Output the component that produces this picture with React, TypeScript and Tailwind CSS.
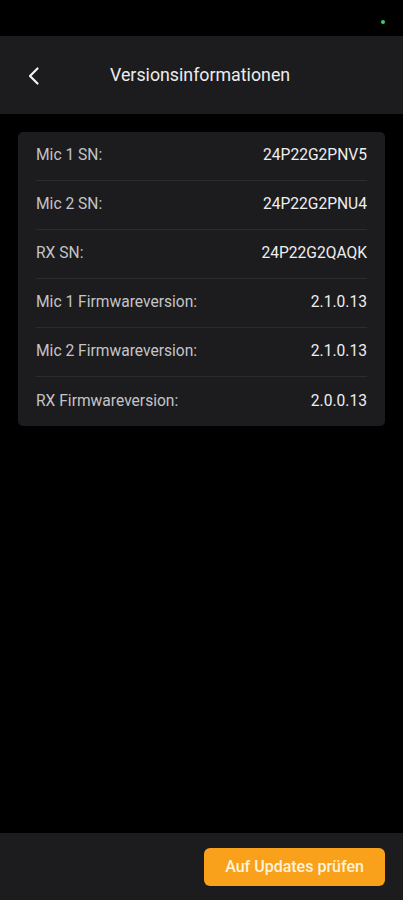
import React from "react";

const rows: [string, string][] = [
  ["Mic 1 SN:", "24P22G2PNV5"],
  ["Mic 2 SN:", "24P22G2PNU4"],
  ["RX SN:", "24P22G2QAQK"],
  ["Mic 1 Firmwareversion:", "2.1.0.13"],
  ["Mic 2 Firmwareversion:", "2.1.0.13"],
  ["RX Firmwareversion:", "2.0.0.13"],
];

export default function App() {
  return (
    <div
      className="w-[403px] h-[900px] bg-black flex flex-col text-white"
      style={{ fontFamily: "Roboto, 'Noto Sans', sans-serif" }}
    >
      <div className="h-[36px] flex justify-end items-start pr-[18px] pt-[20px]">
        <div className="w-[4px] h-[4px] rounded-full bg-[#3ecf6a]" />
      </div>
      <div className="h-[78px] bg-[#1c1c1f] flex items-center">
        <div className="pl-[26px] pt-[1px]">
          <svg width="16" height="20" viewBox="0 0 16 20" fill="none">
            <path d="M11.5 2.5 L4 10 L11.5 17.5" stroke="#f2f2f2" strokeWidth="2.2" strokeLinecap="round" strokeLinejoin="round" />
          </svg>
        </div>
        <div className="ml-[68px] text-[17.8px] text-[#ececec] pt-[1px]">Versionsinformationen</div>
      </div>
      <div className="px-[18px] pt-[18px]">
        <div className="bg-[#1c1c1f] rounded-[5px] px-[18px]">
          {rows.map(([l, v], i) => (
            <div
              key={l}
              className={`h-[49px] flex items-center justify-between text-[15.6px] ${i < rows.length - 1 ? "border-b border-[#2c2c30]" : ""}`}
            >
              <span className="text-[#c4c4c6]">{l}</span>
              <span className="text-[#eeeeee]">{v}</span>
            </div>
          ))}
        </div>
      </div>
      <div className="flex-1" />
      <div className="h-[67px] bg-[#1c1c1f] flex items-start justify-end pr-[18px] pt-[15px]">
        <button className="w-[181px] h-[38px] rounded-[6px] bg-[#f9a11b] text-[#fff4dc] text-[16px] font-medium">
          Auf Updates prüfen
        </button>
      </div>
    </div>
  );
}
